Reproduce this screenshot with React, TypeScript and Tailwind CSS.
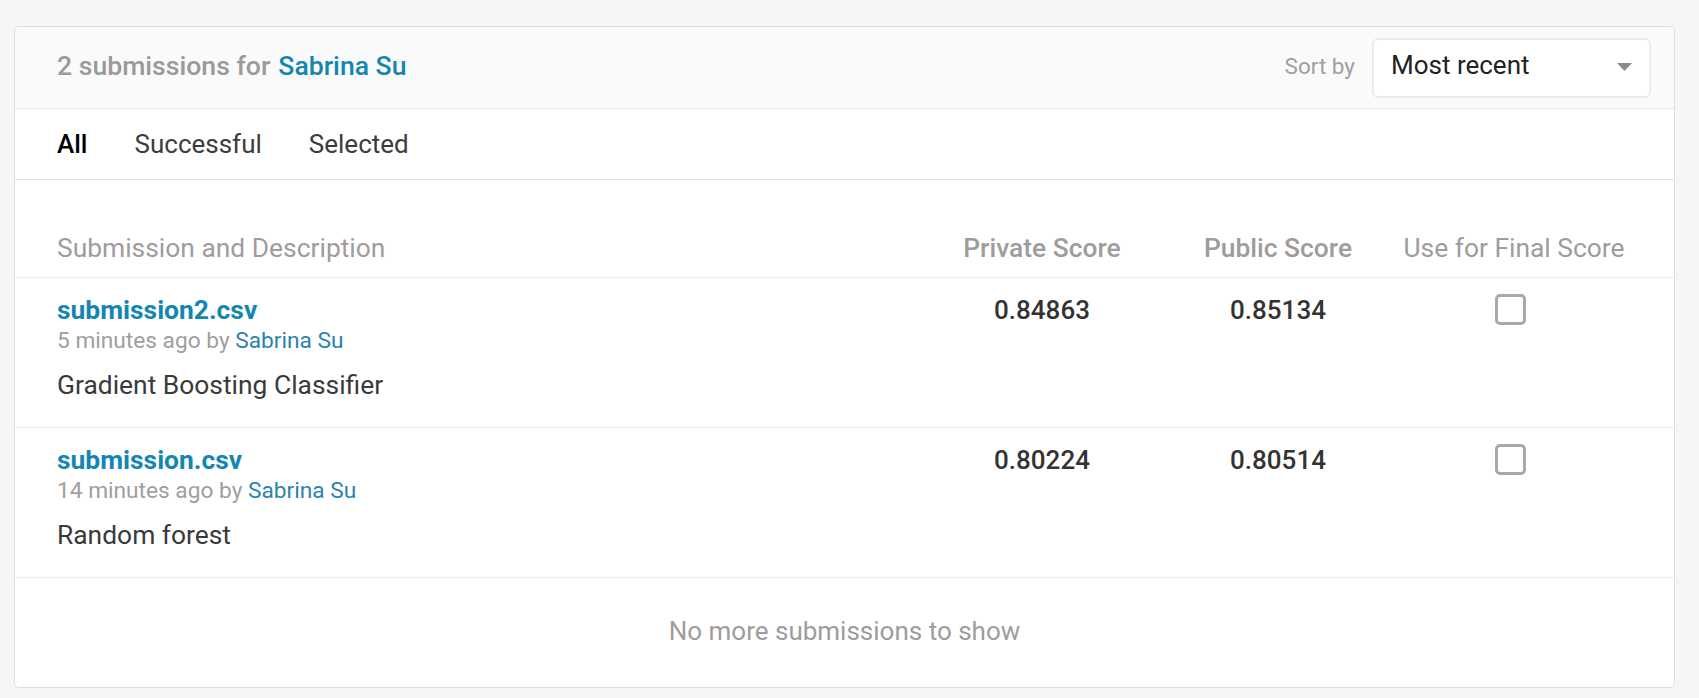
import React from "react";

const rows = [
  {
    file: "submission2.csv",
    when: "5 minutes ago",
    desc: "Gradient Boosting Classifier",
    priv: "0.84863",
    pub: "0.85134",
  },
  {
    file: "submission.csv",
    when: "14 minutes ago",
    desc: "Random forest",
    priv: "0.80224",
    pub: "0.80514",
  },
];

export default function App() {
  return (
    <div
      className="min-h-[698px] w-full bg-[#f4f6f7] pt-[26px] pb-[12px]"
      style={{ fontFamily: "Roboto, 'Liberation Sans', sans-serif" }}
    >
      <div className="ml-[14px] w-[1661px] overflow-hidden rounded-[5px] border border-[#dcdfe0] bg-white">
        {/* Header */}
        <div className="flex h-[82px] items-center justify-between border-b border-[#e6e6e6] bg-[#fafafa] pl-[42px] pr-[23px]">
          <div className="mb-[4px] text-[26.6px] font-medium leading-[36px]">
            <span className="text-[#9b9999]">2 submissions for</span>
            <span className="ml-[8px] text-[#1386b2]">Sabrina Su</span>
          </div>
          <div className="flex items-center gap-[17px]">
            <span className="mb-[4px] text-[22.5px] leading-[30px] text-[#a09e9e]">Sort by</span>
            <div className="flex h-[60px] w-[279px] items-center justify-between rounded-[6px] border-2 border-[#ececec] bg-white pl-[17px] pr-[17px]">
              <span className="mb-[5px] text-[26px] leading-[36px] text-[#222]">Most recent</span>
              <svg width="15" height="8" viewBox="0 0 15 8" className="mb-[2px]">
                <path d="M0 0 L15 0 L7.5 8 Z" fill="#8a8a8a" />
              </svg>
            </div>
          </div>
        </div>

        {/* Tabs */}
        <div className="flex h-[71px] items-center gap-[47px] border-b border-[#e3e3e3] pl-[42px] text-[26px] leading-[36px]">
          <span className="font-medium text-black">All</span>
          <span className="text-[#3c3c3c]">Successful</span>
          <span className="text-[#3c3c3c]">Selected</span>
        </div>

        {/* Table header */}
        <div className="flex border-b border-[#ececec] pl-[42px] pr-[42px] pt-[50px] pb-[11px] text-[26.4px] leading-[36px] text-[#9e9c9c]">
          <div className="flex-1">Submission and Description</div>
          <div className="w-[236px] text-center font-medium">Private Score</div>
          <div className="w-[236px] text-center font-medium">Public Score</div>
          <div className="w-[236px] text-center">Use for Final Score</div>
        </div>

        {/* Rows */}
        {rows.map((r) => (
          <div
            key={r.file}
            className="flex border-b border-[#ececec] pl-[42px] pr-[42px] pt-[16px] pb-[26px]"
          >
            <div className="flex-1">
              <div className="text-[26.4px] font-bold leading-[32px] text-[#1386b2]">{r.file}</div>
              <div className="text-[22.7px] leading-[30px] text-[#a09e9e]">
                {r.when} by <span className="text-[#2b83ad]">Sabrina Su</span>
              </div>
              <div className="mt-[13px] text-[26.4px] leading-[32px] text-[#3a3a3a]">{r.desc}</div>
            </div>
            <div className="w-[236px] text-center text-[26px] font-medium leading-[32px] text-[#333]">
              {r.priv}
            </div>
            <div className="w-[236px] text-center text-[26px] font-medium leading-[32px] text-[#333]">
              {r.pub}
            </div>
            <div className="flex w-[236px] justify-center">
              <div className="mr-[8px] h-[31px] w-[31px] rounded-[5px] border-[3px] border-[#a9a9a9] bg-white" />
            </div>
          </div>
        ))}

        {/* Footer */}
        <div className="flex h-[109px] items-center justify-center pb-[4px] text-[26px] leading-[36px] text-[#9e9c9c]">
          No more submissions to show
        </div>
      </div>
    </div>
  );
}
